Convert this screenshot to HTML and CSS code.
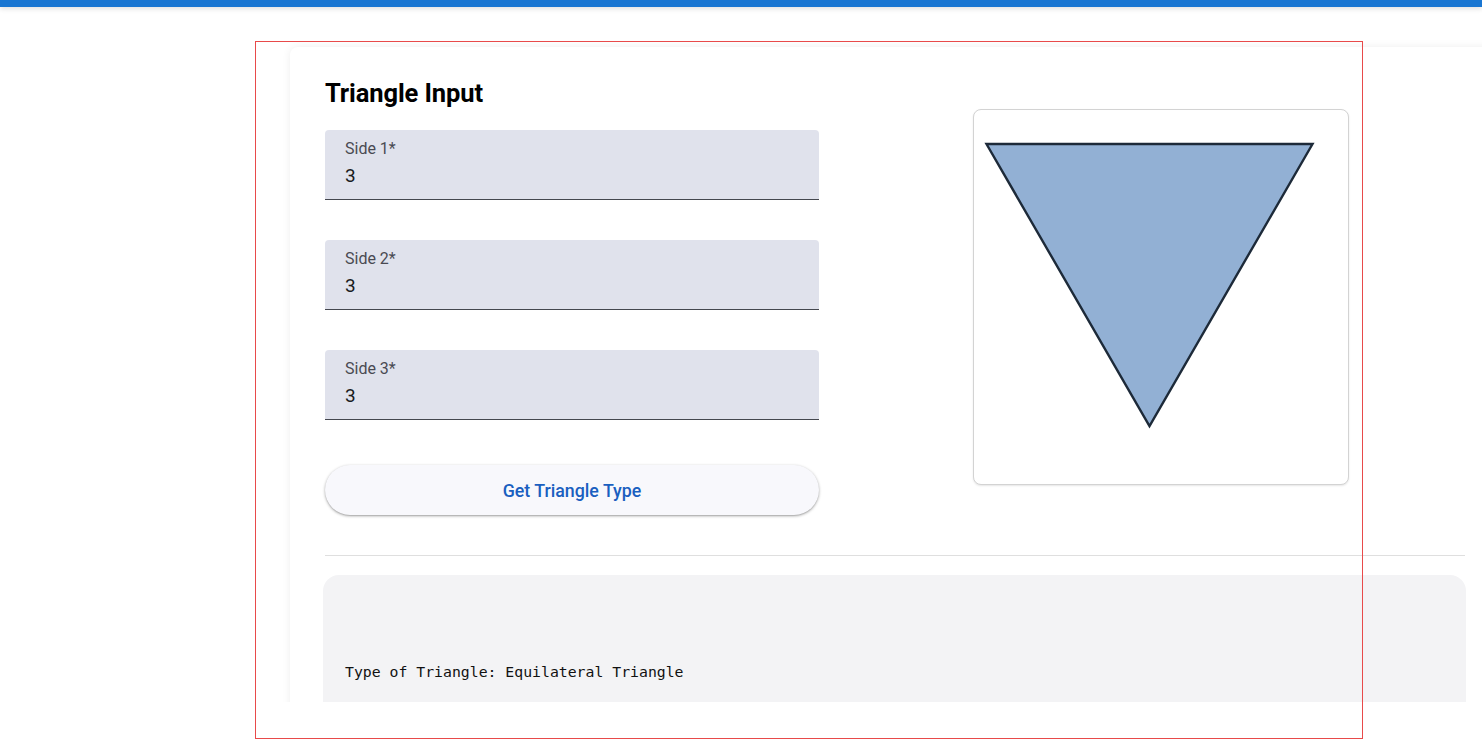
FILE: index.html
```html
<!DOCTYPE html>
<html lang="en">
<head>
<meta charset="utf-8">
<title>Triangle Input</title>
<link rel="stylesheet" href="styles.css">
</head>
<body>
<div class="topbar"></div>
<main class="main">
  <section class="card">
    <div class="row">
      <div class="form-col">
        <h2 class="title">Triangle Input</h2>
        <div class="fields">
          <div class="field">
            <span class="field-label">Side 1*</span>
            <span class="field-value">3</span>
          </div>
          <div class="field">
            <span class="field-label">Side 2*</span>
            <span class="field-value">3</span>
          </div>
          <div class="field">
            <span class="field-label">Side 3*</span>
            <span class="field-value">3</span>
          </div>
        </div>
        <button class="action-btn" type="button">Get Triangle Type</button>
      </div>
      <div class="preview">
        <svg class="preview-svg" width="374" height="374" viewBox="0 0 374 374">
          <polygon points="12.5,34 338.5,34 175.5,316" fill="#92b0d4" stroke="#1d2a39" stroke-width="2.4" stroke-linejoin="miter"/>
        </svg>
      </div>
    </div>
    <hr class="divider">
    <div class="result">
      <pre class="result-text">Type of Triangle: Equilateral Triangle</pre>
    </div>
  </section>
</main>
<div class="overlay-frame"></div>
</body>
</html>
```

FILE: styles.css
```css
html, body {
  margin: 0;
  padding: 0;
  background: #ffffff;
  font-family: Roboto, "Noto Sans", Arial, sans-serif;
  overflow: hidden;
}

.topbar {
  height: 7px;
  background: #1976d2;
  box-shadow: 0 2px 5px rgba(0, 0, 0, 0.12);
  position: relative;
  z-index: 2;
}

.main {
  height: 695px;
  overflow: hidden;
  padding-top: 40px;
  box-sizing: border-box;
}

.card {
  margin-left: 290px;
  width: 1140px;
  padding: 31px 35px 0;
  background: #ffffff;
  border-radius: 8px;
  box-shadow: 0 0 9px rgba(0, 0, 0, 0.07);
  min-height: 800px;
}

.row {
  display: flex;
  align-items: center;
}

.form-col {
  width: 494px;
  display: flex;
  flex-direction: column;
}

.title {
  margin: 1px 0 22px;
  font-size: 25.5px;
  line-height: 29px;
  font-weight: 700;
  color: #000000;
  letter-spacing: -0.1px;
}

.fields {
  display: flex;
  flex-direction: column;
  gap: 40px;
}

.field {
  height: 70px;
  box-sizing: border-box;
  background: #e0e2ec;
  border-radius: 4px 4px 0 0;
  border-bottom: 1px solid #44474e;
  padding: 10px 20px 0;
  display: flex;
  flex-direction: column;
  gap: 6px;
}

.field-label {
  font-size: 16px;
  line-height: 18px;
  color: #4a4a52;
}

.field-value {
  font-size: 19px;
  line-height: 24px;
  color: #1a1b20;
}

.action-btn {
  margin-top: 45px;
  height: 50px;
  width: 100%;
  box-sizing: border-box;
  border: none;
  border-radius: 25px;
  background: #f8f8fc;
  box-shadow: 0 1px 3px rgba(0, 0, 0, 0.35), 0 1px 1px rgba(0, 0, 0, 0.08);
  font-family: Roboto, "Noto Sans", Arial, sans-serif;
  font-size: 17.8px;
  font-weight: 500;
  line-height: 48px;
  color: #1a5fc0;
  padding: 2px 0 0;
}

.preview {
  margin-left: 154px;
  width: 376px;
  height: 376px;
  box-sizing: border-box;
  border: 1px solid #d3d3d3;
  border-radius: 8px;
  box-shadow: 0 1px 2px rgba(0, 0, 0, 0.1);
  background: #ffffff;
}

.preview-svg {
  display: block;
}

.divider {
  margin: 40px 0 0;
  border: none;
  border-top: 1px solid #dfdfdf;
  height: 0;
}

.result {
  margin: 19px -1px 0 -2px;
  background: #f3f3f5;
  border-radius: 16px;
  padding: 88px 22px 40px;
}

.result-text {
  margin: 0;
  font-family: "DejaVu Sans Mono", "Liberation Mono", monospace;
  font-size: 14.8px;
  line-height: 18px;
  color: #111111;
}

.overlay-frame {
  position: fixed;
  left: 255px;
  top: 41px;
  width: 1106px;
  height: 696px;
  border: 1px solid #e84a4a;
  pointer-events: none;
  z-index: 10;
}
```
